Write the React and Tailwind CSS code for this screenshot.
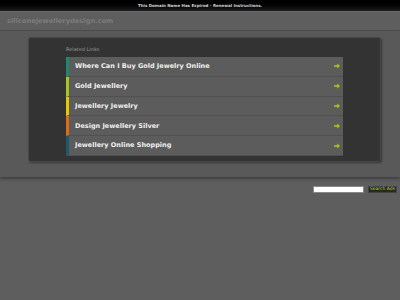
import React from "react";

const links = [
  { label: "Where Can I Buy Gold Jewelry Online", bar: "border-l-[#1b8a6b]" },
  { label: "Gold Jewellery", bar: "border-l-[#a9c41e]" },
  { label: "Jewellery Jewelry", bar: "border-l-[#e6c700]" },
  { label: "Design Jewellery Silver", bar: "border-l-[#e26a12]" },
  { label: "Jewellery Online Shopping", bar: "border-l-[#1b5a6b]" },
];

function Arrow() {
  return (
    <svg width="6" height="6" viewBox="0 0 6 6" className="shrink-0">
      <path d="M0 2.2h3.2V0.6L6 3 3.2 5.4V3.8H0z" fill="#a3cc14" />
    </svg>
  );
}

export default function App() {
  return (
    <div className="w-[400px] h-[300px] bg-[#5e5e5e] overflow-hidden font-['DejaVu_Sans',sans-serif]">
      <div className="h-[12px] bg-gradient-to-b from-[#000] to-[#1c1c1c] border-b border-[#6a6a6a] flex items-center justify-center">
        <span className="text-[4px] font-bold text-[#d4d4d4] leading-none">
          This Domain Name Has Expired - Renewal Instructions.
        </span>
      </div>

      <div className="h-[19px] flex items-center px-[7px] border-b border-[#4e4e4e]">
        <span className="text-[6.7px] font-bold text-[#7c7c7c] leading-none">
          siliconejewellerydesign.com
        </span>
      </div>

      <div className="bg-[#595959] pt-[6px] pb-[15px] shadow-[0_2px_3px_rgba(0,0,0,0.35)]">
        <div className="ml-[28px] w-[353px] h-[125px] rounded-[3px] bg-[#333333] border border-[#474747] shadow-[1px_1px_2px_rgba(0,0,0,0.4)] pl-[37px] pr-[37px] pt-[9px]">
          <div className="text-[5px] text-[#9a9a9a] leading-none mb-[5px]">Related Links</div>
          <div className="bg-[#5c5c5c]">
            {links.map((l) => (
              <div
                key={l.label}
                className={`h-[19.8px] flex items-center justify-between border-l-[3px] ${l.bar} border-b border-b-[#505050] pl-[6px] pr-[3px]`}
              >
                <span className="text-[6.5px] font-bold text-[#f0f0f0] leading-none">{l.label}</span>
                <Arrow />
              </div>
            ))}
          </div>
        </div>
      </div>

      <div className="flex justify-end items-center gap-[4px] pr-[3px] pt-[9px]">
        <div className="w-[51px] h-[7px] bg-white border border-[#888]" />
        <div className="h-[7px] px-[1px] bg-[#262b1c] border border-[#444] flex items-center">
          <span className="text-[4.5px] text-[#b6d34a] leading-none">Search Ads</span>
        </div>
      </div>
    </div>
  );
}
